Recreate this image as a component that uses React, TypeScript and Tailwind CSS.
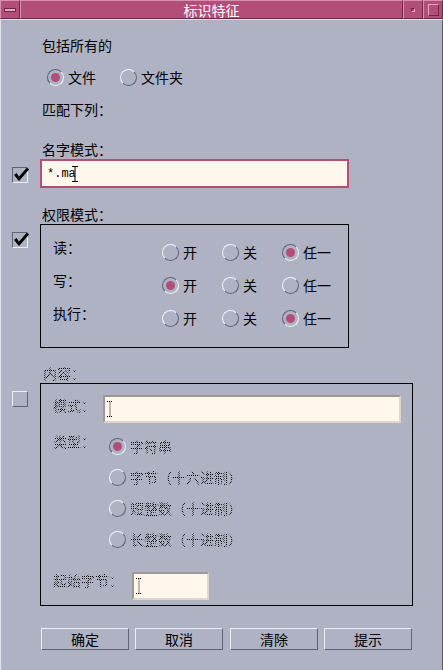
import React from "react";

const stip =
  "bg-[image:repeating-conic-gradient(#000_0_25%,transparent_0_50%)] bg-[length:2px_2px] bg-clip-text text-transparent";

const raised =
  "border border-t-[#eceef4] border-l-[#eceef4] border-b-[#5f6375] border-r-[#5f6375]";
const sunken =
  "border border-t-[#5f6375] border-l-[#5f6375] border-b-[#eceef4] border-r-[#eceef4]";

const Radio = ({
  on = false,
  label,
  disabled = false,
}: {
  on?: boolean;
  label: string;
  disabled?: boolean;
}) => (
  <div className="flex items-center h-[20px]">
    <span
      className={`w-[17px] h-[17px] shrink-0 rounded-full border-[1.5px] flex items-center justify-center ${
        on
          ? "border-t-[#5f6375] border-l-[#5f6375] border-b-[#f1f2f6] border-r-[#f1f2f6]"
          : "border-t-[#f1f2f6] border-l-[#f1f2f6] border-b-[#5f6375] border-r-[#5f6375]"
      }`}
    >
      {on && <span className="w-[9px] h-[9px] rounded-full bg-[#b24e78]" />}
    </span>
    <span className={`ml-[4px] whitespace-nowrap ${disabled ? stip : ""}`}>
      {label}
    </span>
  </div>
);

const Check = ({ on = false }: { on?: boolean }) => (
  <span
    className={`relative block w-[16px] h-[16px] ${on ? sunken : raised}`}
  >
    {on && (
      <svg
        className="absolute left-[0px] top-[-2px]"
        width="18"
        height="18"
        viewBox="0 0 18 18"
      >
        <polygon points="1,9 3.5,7 6,10.5 14,1.5 16,3.5 6,15" fill="#000" />
      </svg>
    )}
  </span>
);

const IBeam = ({ dotted = false }: { dotted?: boolean }) => (
  <svg width="6" height="16" viewBox="0 0 6 16" className="shrink-0">
    <path
      d="M0 0.5 H6 M3 0.5 V15.5 M0 15.5 H6"
      stroke="#000"
      strokeWidth="1"
      fill="none"
      strokeDasharray={dotted ? "1 1" : undefined}
    />
  </svg>
);

const Button = ({ label, extra = "" }: { label: string; extra?: string }) => (
  <div
    className={`w-[88px] h-[22px] flex items-center justify-center ${raised} ${extra}`}
  >
    {label}
  </div>
);

export default function App() {
  return (
    <div className="w-[443px] h-[670px] bg-[#aeb2c3] flex flex-col overflow-hidden text-[14px] leading-[20px] text-black font-['Noto_Sans_CJK_SC','Noto_Sans',sans-serif]">
      {/* title bar */}
      <div className="h-[20px] flex bg-[#b24e78] border-b border-b-[#d9dbe5]">
        <div className="w-[20px] border border-t-[#d98fb0] border-l-[#d98fb0] border-b-[#6b2848] border-r-[#6b2848] flex items-center justify-center">
          <span className="w-[12px] h-[4px] bg-[#e3a5bf] border border-[#6b2848]" />
        </div>
        <div className="flex-1 border border-t-[#d98fb0] border-l-[#d98fb0] border-b-[#6b2848] border-r-[#6b2848] flex items-center justify-center text-white">
          标识特征
        </div>
        <div className="w-[20px] border border-t-[#d98fb0] border-l-[#d98fb0] border-b-[#6b2848] border-r-[#6b2848] flex items-center justify-center">
          <span className="w-[4px] h-[4px] border border-t-[#6b2848] border-l-[#6b2848] border-b-[#e3a5bf] border-r-[#e3a5bf]" />
        </div>
        <div className="w-[20px] border border-t-[#d98fb0] border-l-[#d98fb0] border-b-[#6b2848] border-r-[#6b2848] flex items-center justify-center">
          <span className="w-[11px] h-[12px] border border-t-[#e3a5bf] border-l-[#e3a5bf] border-b-[#6b2848] border-r-[#6b2848]" />
        </div>
      </div>

      {/* body */}
      <div className="flex-1 flex flex-col border-l border-l-[#e2e4ec] border-r border-r-[#555a6a]">
        <div className="pl-[41px] mt-[15px] h-[20px]">包括所有的</div>
        <div className="pl-[46px] mt-[12px] flex">
          <div className="w-[73px]">
            <Radio on label="文件" />
          </div>
          <Radio label="文件夹" />
        </div>
        <div className="pl-[41px] mt-[12px] h-[20px]">匹配下列：</div>

        <div className="pl-[41px] mt-[20px] h-[20px]">名字模式：</div>
        <div className="flex items-center h-[29px]">
          <div className="w-[39px] pl-[11px] pt-[2px]">
            <Check on />
          </div>
          <div className="w-[309px] h-[29px] border-2 border-[#b24e78] bg-[#fff7ec] flex items-center pl-[5px]">
            <span className="font-['Liberation_Mono',monospace] text-[12px]">
              *.ma
            </span>
            <span className="ml-[-4px]">
              <IBeam />
            </span>
          </div>
        </div>

        <div className="pl-[41px] mt-[16px] h-[20px]">权限模式：</div>
        <div className="flex items-start">
          <div className="w-[39px] pl-[11px] pt-[8px]">
            <Check on />
          </div>
          <div className="w-[309px] h-[124px] border border-black pt-[12px] pl-[12px] flex flex-col">
            {[
              { l: "读：", v: 2 },
              { l: "写：", v: 0 },
              { l: "执行：", v: 2 },
            ].map((r) => (
              <div key={r.l} className="h-[33px] flex items-start">
                <div className="w-[109px] h-[20px]">{r.l}</div>
                <div className="flex mt-[5px]">
                  {["开", "关", "任一"].map((o, i) => (
                    <div key={o} className="w-[60px]">
                      <Radio on={r.v === i} label={o} />
                    </div>
                  ))}
                </div>
              </div>
            ))}
          </div>
        </div>

        <div className="pl-[42px] mt-[15px] h-[20px]">
          <span className={stip}>内容：</span>
        </div>
        <div className="flex items-start">
          <div className="w-[39px] pl-[11px] pt-[8px]">
            <Check />
          </div>
          <div className="w-[373px] h-[223px] border border-black pt-[11px] pl-[12px] flex flex-col">
            <div className="flex items-start">
              <div className="w-[50px] h-[20px]">
                <span className={stip}>模式：</span>
              </div>
              <div className="w-[298px] h-[28px] border-2 border-t-[#9c9892] border-l-[#9c9892] border-b-[#ddd6c8] border-r-[#ddd6c8] bg-[#fff7ec] flex items-center pl-[2px]">
                <IBeam dotted />
              </div>
            </div>
            <div className="flex items-start mt-[8px]">
              <div className="w-[56px] h-[20px]">
                <span className={stip}>类型：</span>
              </div>
              <div className="flex flex-col gap-[11px] mt-[5px]">
                <Radio on disabled label="字符串" />
                <Radio disabled label="字节（十六进制）" />
                <Radio disabled label="短整数（十进制）" />
                <Radio disabled label="长整数（十进制）" />
              </div>
            </div>
            <div className="flex items-start mt-[21px]">
              <div className="w-[79px] h-[20px]">
                <span className={stip}>起始字节：</span>
              </div>
              <div className="mt-[2px] w-[77px] h-[28px] border-2 border-t-[#9c9892] border-l-[#9c9892] border-b-[#ddd6c8] border-r-[#ddd6c8] bg-[#fff7ec] flex items-center pl-[2px]">
                <IBeam dotted />
              </div>
            </div>
          </div>
        </div>

        <div className="flex pl-[40px] mt-[22px] gap-[6px]">
          <Button label="确定" />
          <Button label="取消" />
          <Button label="清除" extra="ml-[1px]" />
          <Button label="提示" />
        </div>
      </div>
    </div>
  );
}
